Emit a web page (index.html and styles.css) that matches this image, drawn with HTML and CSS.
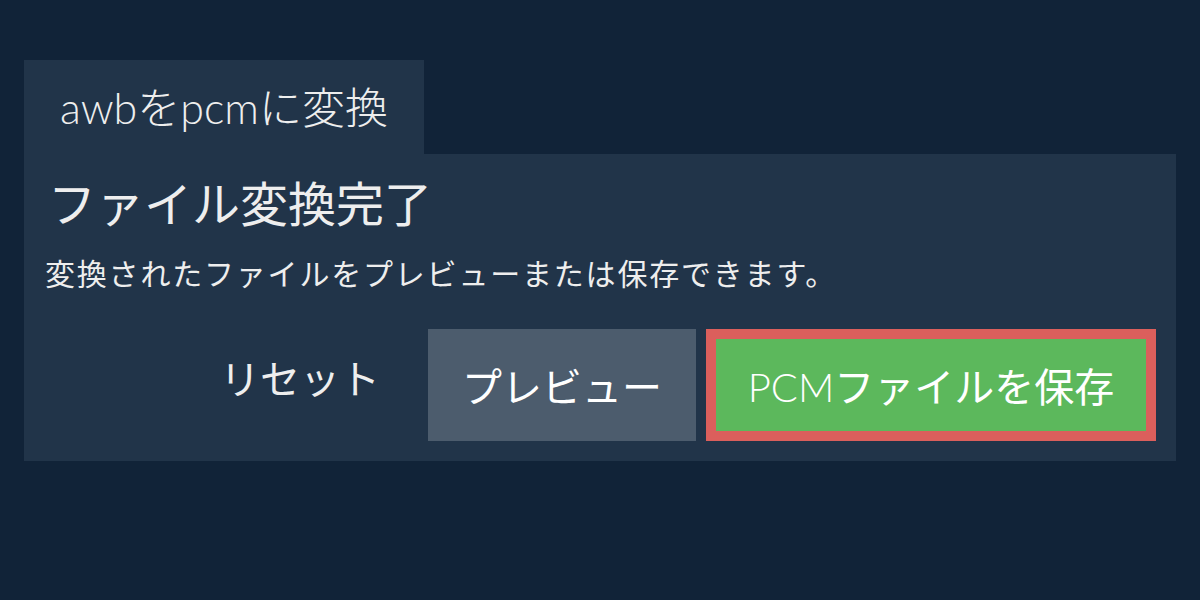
FILE: index.html
```html
<!DOCTYPE html>
<html lang="ja">
<head>
<meta charset="utf-8">
<link rel="stylesheet" href="styles.css">
</head>
<body>
<div class="wrap">
  <div class="tab">awbをpcmに変換</div>
  <div class="panel">
    <h1 class="title">ファイル変換完了</h1>
    <p class="desc">変換されたファイルをプレビューまたは保存できます。</p>
    <div class="actions">
      <button class="btn btn-reset">リセット</button>
      <button class="btn btn-preview">プレビュー</button>
      <button class="btn btn-save"><span class="latin">PCM</span>ファイルを保存</button>
    </div>
  </div>
</div>
</body>
</html>
```
FILE: styles.css
```css
html, body {
  margin: 0;
  padding: 0;
}
body {
  background: #112338;
  width: 1200px;
  height: 600px;
  font-family: Lato, "Noto Sans CJK JP", sans-serif;
  color: #eeeeee;
}
.wrap {
  padding: 60px 24px 0 24px;
  display: flex;
  flex-direction: column;
  align-items: flex-start;
}
.tab {
  background: #213449;
  width: 400px;
  height: 94px;
  box-sizing: border-box;
  padding-left: 36px;
  display: flex;
  align-items: center;
  font-size: 43px;
  font-weight: 300;
  padding-bottom: 4px;
}
.panel {
  background: #213449;
  align-self: stretch;
  padding: 20px 20px 20px 24px;
}
.title {
  margin: 0;
  font-weight: normal;
  font-size: 48px;
  line-height: 60px;
}
.desc {
  margin: 19px 0 0 -3px;
  font-size: 30px;
  line-height: 40px;
  letter-spacing: 1.8px;
}
.actions {
  display: flex;
  justify-content: flex-end;
  gap: 10px;
  margin-top: 36px;
}
.btn {
  font-family: Lato, "Noto Sans CJK JP", sans-serif;
  font-size: 40px;
  color: #ffffff;
  border: none;
  height: 112px;
  box-sizing: border-box;
  padding: 0 30px;
  cursor: pointer;
}
.btn-reset {
  background: transparent;
  color: #eeeeee;
  padding: 0 38px 16px 0;
}
.btn-preview {
  background: #4c5c6d;
  width: 268px;
}
.btn-save {
  background: #5cb85c;
  border: 10px solid #db5f5c;
  width: 450px;
  padding: 0 20px;
}
.latin {
  font-weight: 300;
}
```
